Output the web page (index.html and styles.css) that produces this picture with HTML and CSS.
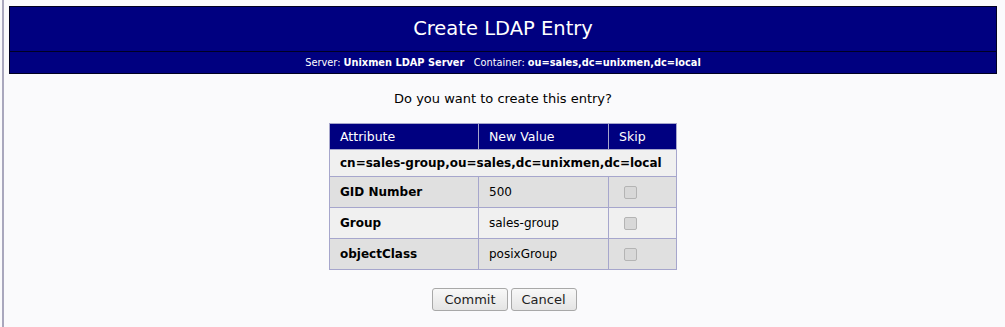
FILE: index.html
```html
<!DOCTYPE html>
<html>
<head>
<meta charset="utf-8">
<link rel="stylesheet" href="styles.css">
</head>
<body>
<div class="frame">
  <div class="header">
    <div class="title">Create LDAP Entry</div>
    <div class="subtitle">Server: <b>Unixmen LDAP Server</b>&nbsp;&nbsp;&nbsp;Container: <b>ou=sales,dc=unixmen,dc=local</b></div>
  </div>
  <div class="content">
    <p class="question">Do you want to create this entry?</p>
    <table class="entry">
      <thead>
        <tr><th class="c1">Attribute</th><th class="c2">New Value</th><th class="c3">Skip</th></tr>
      </thead>
      <tbody>
        <tr class="dn"><td colspan="3">cn=sales-group,ou=sales,dc=unixmen,dc=local</td></tr>
        <tr class="dark"><td class="attr">GID Number</td><td>500</td><td class="skip"><span class="cb"></span></td></tr>
        <tr class="light"><td class="attr">Group</td><td>sales-group</td><td class="skip"><span class="cb"></span></td></tr>
        <tr class="dark"><td class="attr">objectClass</td><td>posixGroup</td><td class="skip"><span class="cb"></span></td></tr>
      </tbody>
    </table>
    <div class="buttons">
      <button class="btn">Commit</button>
      <button class="btn">Cancel</button>
    </div>
  </div>
</div>
</body>
</html>
```
FILE: styles.css
```css
html, body {
  margin: 0;
  padding: 0;
  background: #fafafc;
  font-family: "DejaVu Sans", sans-serif;
  height: 100%;
}
.frame {
  border-left: 2px solid #a9a7bd;
  margin-left: 2px;
  min-height: 327px;
  box-sizing: border-box;
  padding: 6px 8px 0 5px;
}
.header {
  background: #000080;
  border: 1px solid #000022;
  color: #fff;
}
.title {
  height: 44px;
  line-height: 44px;
  text-align: center;
  font-size: 19.5px;
  border-bottom: 1px solid #000022;
}
.subtitle {
  height: 21px;
  line-height: 21px;
  text-align: center;
  font-size: 9.8px;
}
.subtitle b { font-weight: bold; }
.content {
  display: flex;
  flex-direction: column;
  align-items: center;
}
.question {
  margin: 17px 0 0;
  font-size: 13px;
  line-height: 16px;
  color: #000;
}
.entry {
  margin-top: 16px;
  border-collapse: collapse;
  border: 1px solid #a6a6cc;
  font-size: 12px;
}
.entry th {
  background: #000080;
  color: #fff;
  font-weight: normal;
  font-size: 12.5px;
  text-align: left;
  height: 25px;
  padding: 0 10px;
  border: 1px solid #a6a6cc;
  border-top: none;
  white-space: nowrap;
}
.entry th.c1 { width: 128px; }
.entry th.c2 { width: 109px; }
.entry th.c3 { width: 47px; }
.entry td {
  border: 1px solid #a6a6cc;
  padding: 0 10px;
  height: 30px;
  color: #000;
  white-space: nowrap;
}
.entry tr.dn td {
  background: #f0f0f0;
  font-weight: bold;
  height: 26px;
  padding: 0 10px;
}
.entry tr.dark td { background: #e0e0e0; }
.entry tr.light td { background: #f0f0f0; }
.entry td.attr { font-weight: bold; }
.entry td.skip { padding-left: 15px; }
.cb {
  display: inline-block;
  width: 11px;
  height: 11px;
  border: 1px solid #b4b4b4;
  border-radius: 2px;
  background: #d8d8d8;
  vertical-align: middle;
}
.buttons {
  margin-top: 18px;
  display: flex;
  gap: 3px;
  padding-left: 3px;
}
.btn {
  font-family: "DejaVu Sans", sans-serif;
  font-size: 13px;
  height: 23px;
  padding: 0 11px;
  border: 1px solid #a8a8a8;
  border-radius: 3px;
  background: linear-gradient(#f8f8f8, #e4e4e4);
  color: #222;
}
.btn + .btn { padding: 0 10px; }
```
